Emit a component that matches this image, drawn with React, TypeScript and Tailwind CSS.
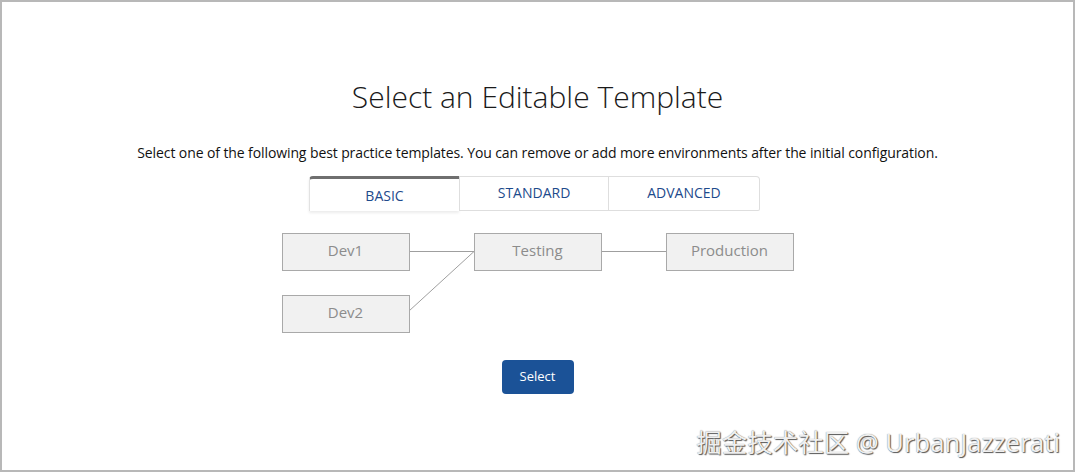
import React from "react";

function Node({ label, x, y }: { label: string; x: number; y: number }) {
  return (
    <div
      className="absolute w-[128px] h-[38px] bg-[#f1f1f1] border border-[#a9a9a9] flex items-center justify-center pb-[3px] text-[15px] text-[#8c8c8c]"
      style={{ left: x, top: y }}
    >
      {label}
    </div>
  );
}

export default function App() {
  return (
    <div
      className="relative w-[1075px] h-[472px] border-2 border-[#b8b8b8] bg-white flex flex-col items-center overflow-hidden"
      style={{ fontFamily: '"Open Sans", "Liberation Sans", sans-serif' }}
    >
      <h1 className="mt-[76px] h-[38px] leading-[38px] text-[30px] font-light text-[#1a1a1a]">
        Select an Editable Template
      </h1>
      <p className="mt-[27px] h-[20px] leading-[20px] text-[14px] text-[#111] tracking-[-0.1px]">
        Select one of the following best practice templates. You can remove or add more environments after the initial configuration.
      </p>
      <div className="mt-[13px] mr-[6px] flex h-[35px] w-[451px] text-[14px] text-[#1d4a8c]">
        <div className="w-[150px] h-[35px] bg-white border-t-[3px] border-t-[#6f6f6f] border-l border-l-[#e2e2e2] rounded-tl-[4px] shadow-[0_2px_3px_rgba(0,0,0,0.08)] flex items-center justify-center">
          BASIC
        </div>
        <div className="w-[150px] h-[35px] bg-white border border-[#dedede] flex items-center justify-center pb-[2px]">
          STANDARD
        </div>
        <div className="w-[151px] h-[35px] bg-white border border-l-0 border-[#dedede] rounded-tr-[4px] rounded-br-[2px] flex items-center justify-center pb-[2px]">
          ADVANCED
        </div>
      </div>
      <div className="relative mt-[22px] w-[512px] h-[100px]">
        <svg className="absolute left-0 top-0" width="512" height="100">
          <line x1="127" y1="18.5" x2="192" y2="18.5" stroke="#9f9f9f" strokeWidth="1" />
          <line x1="319" y1="18.5" x2="384" y2="18.5" stroke="#9f9f9f" strokeWidth="1" />
          <line x1="127" y1="78" x2="192" y2="18.5" stroke="#9f9f9f" strokeWidth="1" />
        </svg>
        <Node label="Dev1" x={0} y={0} />
        <Node label="Testing" x={192} y={0} />
        <Node label="Production" x={384} y={0} />
        <Node label="Dev2" x={0} y={62} />
      </div>
      <button className="mt-[27px] w-[72px] h-[34px] rounded-[4px] bg-[#1b5297] text-white text-[13px] flex items-center justify-center">
        Select
      </button>
      <div
        className="absolute right-[13px] bottom-[13px] text-[25.5px] leading-[30px] text-[#efefef] [text-shadow:1px_1px_1px_rgba(0,0,0,0.65),0_0_1px_rgba(0,0,0,0.5)]"
        style={{ fontFamily: '"Noto Sans", "Noto Sans CJK SC", sans-serif' }}
      >
        掘金技术社区 @ UrbanJazzerati
      </div>
    </div>
  );
}
